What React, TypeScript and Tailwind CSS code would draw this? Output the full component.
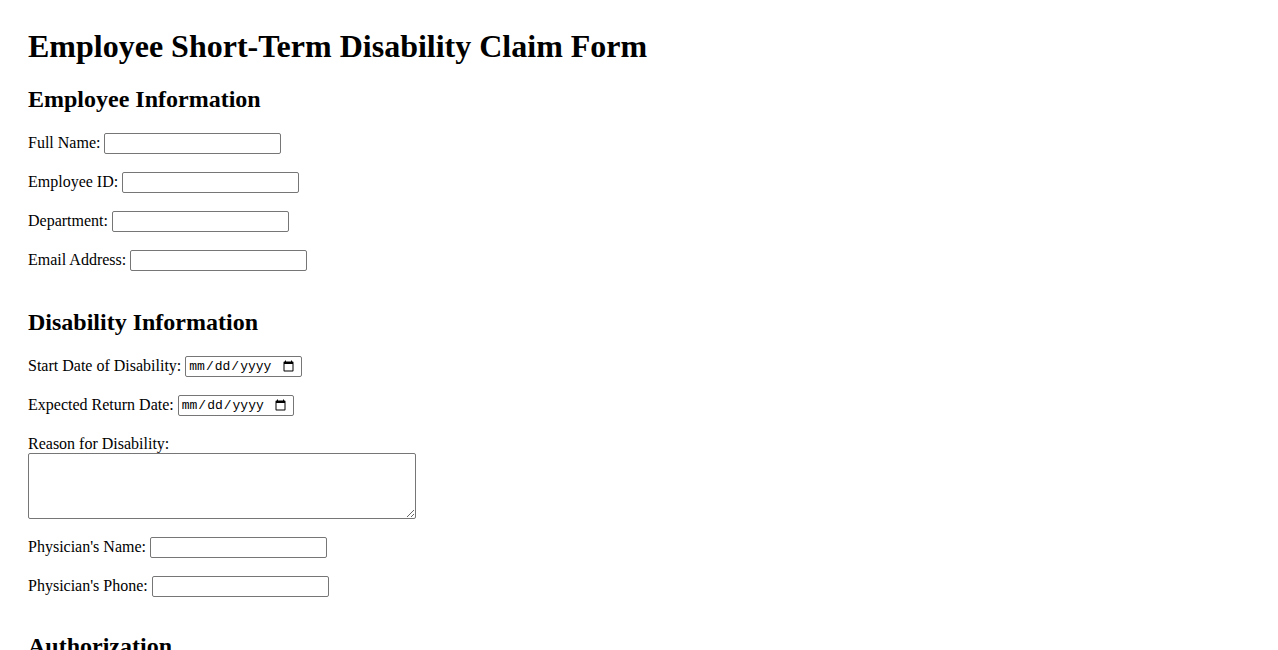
import React from "react";

const serif = "font-['Liberation_Serif','Times_New_Roman',serif]";
const inputCls =
  "w-[177px] h-[21px] border border-[#767676] rounded-[2px] bg-white px-[2px] text-[13px] font-['Liberation_Sans',Arial,sans-serif] outline-none";
const dateCls =
  "h-[21px] border border-[#767676] rounded-[2px] bg-white pl-[2px] pr-[4px] text-[13px] font-['Liberation_Mono','Courier_New',monospace] text-black outline-none";

function Field({ label, type = "text", width = "", className = "" }: { label: string; type?: string; width?: string; className?: string }) {
  return (
    <div className={`flex items-center gap-[4px] h-[21px] ${className}`}>
      <label className="text-[16px] leading-[18px] pb-[2px]">{label}</label>
      <input type={type} className={type === "date" ? `${dateCls} ${width}` : inputCls} />
    </div>
  );
}

export default function App() {
  return (
    <div className={`min-h-screen bg-white text-black px-[28px] pt-[28px] ${serif}`}>
      <h1 className="text-[32px] font-bold leading-[37px]">Employee Short-Term Disability Claim Form</h1>

      {/* Employee section */}
      <h2 className="mt-[20px] text-[24px] font-bold leading-[28px]">Employee Information</h2>
      <Field label="Full Name:" className="mt-[20px]" />
      <Field label="Employee ID:" className="mt-[18px]" />
      <Field label="Department:" className="mt-[18px]" />
      <Field label="Email Address:" className="mt-[18px]" />

      {/* Disability section */}
      <h2 className="mt-[37px] text-[24px] font-bold leading-[28px]">Disability Information</h2>
      <Field label="Start Date of Disability:" type="date" width="w-[117px]" className="mt-[20px]" />
      <Field label="Expected Return Date:" type="date" width="w-[116px]" className="mt-[18px]" />
      <div className="mt-[19px] text-[16px] leading-[18px]">Reason for Disability:</div>
      <textarea className="block w-[388px] h-[66px] border border-[#767676] rounded-[2px] bg-white outline-none"></textarea>
      <Field label="Physician's Name:" className="mt-[18px]" />
      <Field label="Physician's Phone:" className="mt-[18px]" />

      {/* Authorization section */}
      <h2 className="mt-[35px] text-[24px] font-bold leading-[28px]">Authorization</h2>
      <div className="h-[200px]"></div>
    </div>
  );
}
